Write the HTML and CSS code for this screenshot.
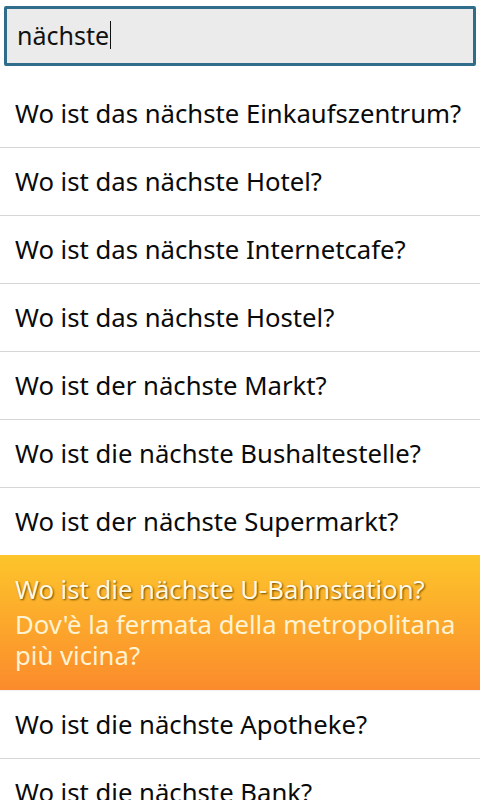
FILE: index.html
```html
<!DOCTYPE html>
<html>
<head>
<meta charset="utf-8">
<link rel="stylesheet" href="styles.css">
</head>
<body>
<div class="search">
  <div class="field"><span class="value">nächste</span><span class="caret"></span></div>
</div>
<ul class="list">
  <li class="row">Wo ist das nächste Einkaufszentrum?</li>
  <li class="row">Wo ist das nächste Hotel?</li>
  <li class="row">Wo ist das nächste Internetcafe?</li>
  <li class="row">Wo ist das nächste Hostel?</li>
  <li class="row">Wo ist der nächste Markt?</li>
  <li class="row">Wo ist die nächste Bushaltestelle?</li>
  <li class="row">Wo ist der nächste Supermarkt?</li>
  <li class="row active">
    <div class="src">Wo ist die nächste U-Bahnstation?</div>
    <div class="tr">Dov'è la fermata della metropolitana più vicina?</div>
  </li>
  <li class="row">Wo ist die nächste Apotheke?</li>
  <li class="row">Wo ist die nächste Bank?</li>
</ul>
</body>
</html>
```
FILE: styles.css
```css
html, body {
  margin: 0;
  padding: 0;
  background: #ffffff;
  width: 480px;
  height: 800px;
  overflow: hidden;
  font-family: "Noto Sans", "Open Sans", sans-serif;
}
.search {
  height: 80px;
  padding: 6px 4px 0 4px;
  box-sizing: border-box;
}
.field {
  height: 60px;
  box-sizing: border-box;
  border: 3px solid #2f6d8b;
  border-radius: 2px;
  background: #ebebeb;
  display: flex;
  align-items: center;
  padding-left: 10px;
  padding-bottom: 2px;
  font-size: 25px;
  color: #111;
}
.caret {
  display: inline-block;
  width: 1px;
  height: 28px;
  background: #111;
  margin-left: 1px;
}
.list {
  list-style: none;
  margin: 0;
  padding: 0;
}
.row {
  height: 67px;
  border-bottom: 1px solid #d6d6d6;
  display: flex;
  align-items: center;
  padding-left: 15px;
  font-size: 25.7px;
  color: #0a0a0a;
  white-space: nowrap;
}
.row.active {
  height: 135px;
  flex-direction: column;
  align-items: flex-start;
  justify-content: center;
  background: linear-gradient(#fdc52b, #fb8b2c);
  border-bottom: 1px solid #f2f2f2;
  white-space: normal;
  padding-right: 8px;
  margin-top: -1px;
}
.src {
  color: #fff8e2;
  text-shadow: 1px 1px 2px #6b4a00;
  line-height: 32px;
}
.tr {
  color: #fff3d2;
  line-height: 31px;
  margin-top: 3px;
}
```
